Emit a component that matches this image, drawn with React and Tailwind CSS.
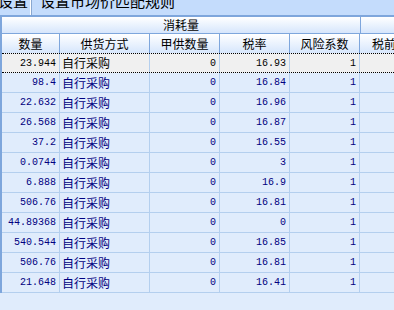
const rows = [
  ['23.944', '自行采购', '0', '16.93', '1'],
  ['98.4', '自行采购', '0', '16.84', '1'],
  ['22.632', '自行采购', '0', '16.96', '1'],
  ['26.568', '自行采购', '0', '16.87', '1'],
  ['37.2', '自行采购', '0', '16.55', '1'],
  ['0.0744', '自行采购', '0', '3', '1'],
  ['6.888', '自行采购', '0', '16.9', '1'],
  ['506.76', '自行采购', '0', '16.81', '1'],
  ['44.89368', '自行采购', '0', '0', '1'],
  ['540.544', '自行采购', '0', '16.85', '1'],
  ['506.76', '自行采购', '0', '16.81', '1'],
  ['21.648', '自行采购', '0', '16.41', '1'],
]

const cjk = { fontFamily: '"Noto Sans CJK SC", "DejaVu Sans", sans-serif' }
const mono = { fontFamily: '"Liberation Mono", "DejaVu Sans Mono", monospace' }

function HeadCell({ w, children }) {
  return (
    <div className={`${w} shrink-0 h-full flex items-center justify-center whitespace-nowrap border-r border-[#7ea6dc]`}>
      {children}
    </div>
  )
}

function Row({ r, selected }) {
  const text = selected ? 'text-black' : 'text-[#000080]'
  const bg = selected ? 'bg-[#f0f0f0]' : 'bg-[#e0ecfc]'
  const border = selected ? 'border-y border-dotted border-black' : 'border-b border-[#b4cfee]'
  return (
    <div className={`flex h-[20px] ${bg} ${text} ${border} box-border`}>
      <div className="w-[58px] shrink-0 border-r border-[#b4cfee] flex items-center justify-end pr-[3px] text-[10px]" style={mono}>{r[0]}</div>
      <div className="w-[90px] shrink-0 border-r border-[#b4cfee] flex items-center pl-[2px] text-[12px]" style={cjk}>{r[1]}</div>
      <div className="w-[70px] shrink-0 border-r border-[#b4cfee] flex items-center justify-end pr-[3px] text-[10px]" style={mono}>{r[2]}</div>
      <div className="w-[70px] shrink-0 border-r border-[#b4cfee] flex items-center justify-end pr-[3px] text-[10px]" style={mono}>{r[3]}</div>
      <div className="w-[70px] shrink-0 border-r border-[#b4cfee] flex items-center justify-end pr-[3px] text-[10px]" style={mono}>{r[4]}</div>
      <div className="flex-1" />
    </div>
  )
}

export default function App() {
  return (
    <div className="w-[394px] h-[310px] overflow-hidden bg-[#e0ecfc] flex flex-col">
      <div className="h-[15px] shrink-0 bg-[#c4dcfc] flex overflow-hidden text-[15px] text-black leading-none whitespace-nowrap" style={cjk}>
        <div className="w-[32px] shrink-0 -mt-[7px] -ml-[2px]">设置</div>
        <div className="w-[1px] bg-white shrink-0" />
        <div className="w-[1px] bg-[#8aa8d0] shrink-0" />
        <div className="-mt-[7px] pl-[8px]">设置市场价匹配规则</div>
      </div>
      <div className="h-[2px] shrink-0 bg-[#7ea6dc]" />
      <div className="border-l-2 border-[#7ea6dc] flex flex-col">
        <div className="flex h-[17px] bg-gradient-to-b from-white to-[#d6e6fc] border-b border-[#7ea6dc] text-[12px] text-black" style={cjk}>
          <HeadCell w="w-[359px]">消耗量</HeadCell>
          <div className="flex-1" />
        </div>
        <div className="flex h-[19px] bg-gradient-to-b from-white to-[#d6e6fc] text-[12px] text-black" style={cjk}>
          <HeadCell w="w-[58px]">数量</HeadCell>
          <HeadCell w="w-[90px]">供货方式</HeadCell>
          <HeadCell w="w-[70px]">甲供数量</HeadCell>
          <HeadCell w="w-[70px]">税率</HeadCell>
          <HeadCell w="w-[70px]">风险系数</HeadCell>
          <div className="flex-1 pl-[12px] flex items-center whitespace-nowrap overflow-hidden">税前</div>
        </div>
        {rows.map((r, i) => <Row key={i} r={r} selected={i === 0} />)}
      </div>
    </div>
  )
}
